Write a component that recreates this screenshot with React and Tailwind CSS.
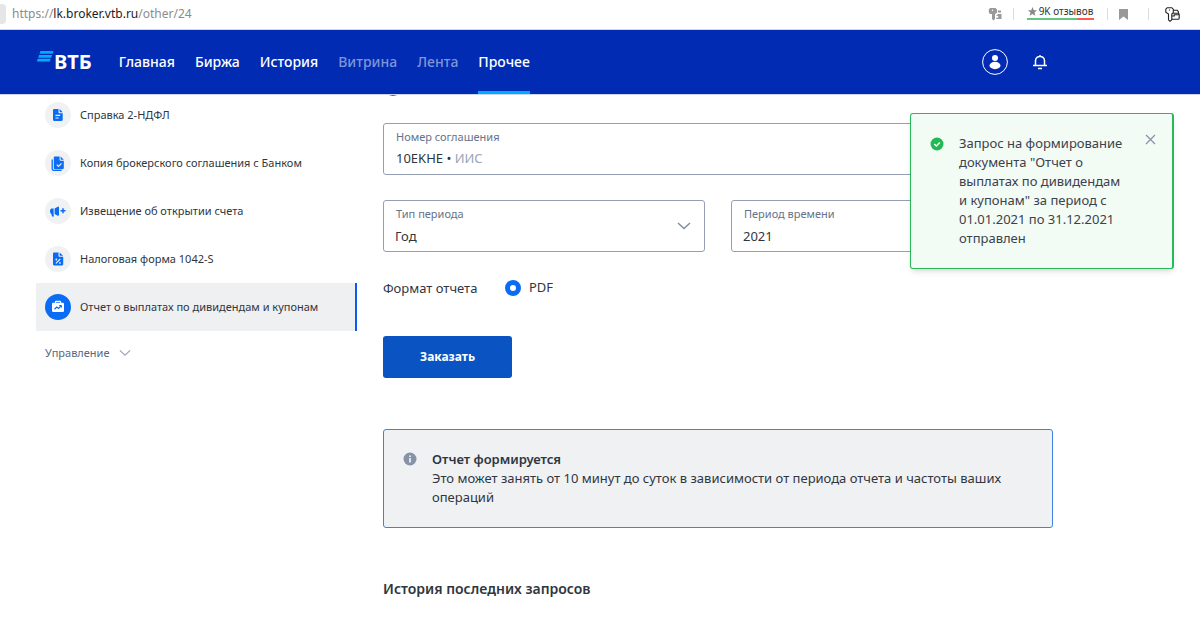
import { useState } from 'react';

const NAV = [
  { label: 'Главная' },
  { label: 'Биржа' },
  { label: 'История' },
  { label: 'Витрина', muted: true },
  { label: 'Лента', muted: true },
  { label: 'Прочее', active: true },
];

function DocIcon() {
  return (
    <svg width="14" height="14" viewBox="0 0 14 14" fill="#0a6cf5">
      <path d="M3.200 1h4.300v3.300c0 .6.400 1 1 1h3.200v6.500c0 .7-.5 1.200-1.200 1.200H3.200C2.500 13 2 12.500 2 11.800V2.200C2 1.500 2.500 1 3.200 1z" />
      <path d="M8.600 1l3.100 3.200H9.200c-.3 0-.6-.3-.6-.6z" />
      <path d="M4.500 7.300h4.700M4.500 10h3.200" stroke="#eef0f3" strokeWidth="1.200" />
    </svg>
  );
}

function CopyIcon() {
  return (
    <svg width="14" height="15" viewBox="0 0 14 15" fill="#0a6cf5">
      <path d="M1.200 3.500v9.300c0 .9.700 1.600 1.600 1.600h7.700" fill="none" stroke="#0a6cf5" strokeWidth="1.300" />
      <path d="M4 .6h4.600v3.200c0 .5.400.9.900.9h3.300v7.400c0 .7-.5 1.200-1.200 1.200H4c-.7 0-1.200-.5-1.200-1.200V1.800C2.800 1.100 3.300.6 4 .6z" />
      <path d="M9.600.6l3.200 3.100h-2.600c-.3 0-.6-.3-.6-.6z" />
      <path d="M5.800 8.600l1.700 1.700 3-3" fill="none" stroke="#eef0f3" strokeWidth="1.200" />
    </svg>
  );
}

function MegaphoneIcon() {
  return (
    <svg width="18" height="13" viewBox="0 0 18 13" fill="#0a6cf5">
      <path d="M8.800 1.700c.6-.3 1.200 0 1.200.6v7.800c0 .6-.6.900-1.200.6L5.600 9V3.400zM4.600 3.400V9l.3 2.600H3L2.400 9C1.500 8.400 1 7.400 1 6.200s.5-2.400 1.400-2.800z" />
      <path d="M14 3.200v5M11.500 5.700h5" stroke="#0a6cf5" strokeWidth="1.500" />
    </svg>
  );
}

function PercentIcon() {
  return (
    <svg width="14" height="14" viewBox="0 0 14 14" fill="#0a6cf5">
      <path d="M3.200.5h4.300v3.300c0 .6.400 1 1 1h3.700v7.500c0 .7-.5 1.200-1.200 1.200H3.200c-.7 0-1.200-.5-1.200-1.200V1.700C2 1 2.500.5 3.200.5z" />
      <path d="M8.600.5l3.500 3.300H9.200c-.3 0-.6-.3-.6-.6z" />
      <path d="M4.900 11.400l4.400-4.400" stroke="#eef0f3" strokeWidth="1.100" />
      <circle cx="5.300" cy="7.500" r=".9" fill="#eef0f3" />
      <circle cx="8.900" cy="10.900" r=".9" fill="#eef0f3" />
    </svg>
  );
}

function CaseIcon() {
  return (
    <svg width="14" height="14" viewBox="0 0 14 14">
      <path d="M4.500 3V2c0-.4.300-.700.700-.700h3.600c.4 0 .7.300.7.700v1" fill="none" stroke="#fff" strokeWidth="1.200" />
      <rect x="1" y="2.800" width="12" height="9.200" rx="1.200" fill="#fff" />
      <path d="M3.500 9.300l2.300-2.200 1.700 1.300 2.500-2.500" fill="none" stroke="#0a6cf5" strokeWidth="1.200" />
      <path d="M8.200 5.500h2.200v2.200" fill="none" stroke="#0a6cf5" strokeWidth="1" />
    </svg>
  );
}

function Chevron({ className }) {
  return (
    <svg className={className} width="14" height="8" viewBox="0 0 14 8" fill="none" stroke="currentColor" strokeWidth="1.400">
      <path d="M1 1l6 5.500L13 1" />
    </svg>
  );
}

const DOCS = [
  { label: 'Справка 2-НДФЛ', Icon: DocIcon },
  { label: 'Копия брокерского соглашения с Банком', Icon: CopyIcon },
  { label: 'Извещение об открытии счета', Icon: MegaphoneIcon },
  { label: 'Налоговая форма 1042-S', Icon: PercentIcon },
  { label: 'Отчет о выплатах по дивидендам и купонам', Icon: CaseIcon, active: true },
];

function AddressBar() {
  return (
    <div className="flex h-[30px] items-center border-b border-[#cfd3ea] bg-white pr-5 pb-px">
      <span className="h-5 w-[6px] rounded-r bg-[#e6e6e6]" />
      <p className="ml-[6px] text-xs text-[#8c8c8c]">
        https://<span className="text-[#1c1c1c]">lk.broker.vtb.ru</span>/other/24
      </p>
      <div className="ml-auto flex items-center">
        <svg width="14" height="14" viewBox="0 0 14 14" fill="#999">
          <path d="M2 1h5.500L9 2.500v3L7.500 7H7v5l-1.500 1.500L4 12V7H2L.8 5.500v-3z" />
          <path d="M9.800 3.500H13v2H9.800zM8.300 9V8.200h1.200V7h4v5H8.300v-1.200h2V9z" />
          <circle cx="4.500" cy="3.200" r=".7" fill="#fff" />
        </svg>
        <span className="ml-[11px] h-3 w-px bg-[#dcdcdc]" />
        <a href="#reviews" className="ml-[13px] flex w-[67px] flex-col pb-1">
          <span className="flex items-center justify-center gap-[2px] text-[10px] leading-[14px] whitespace-nowrap text-[#333]">
            <svg width="9" height="9" viewBox="0 0 10 10" fill="#888">
              <path d="M5 0l1.400 3.500L10 3.700 7.200 6l1 3.800L5 7.700 1.800 9.800l1-3.800L0 3.700l3.600-.2z" />
            </svg>
            9K отзывов
          </span>
          <span className="flex h-[2px]">
            <span className="w-3/4 bg-[#5fc77f]" />
            <span className="w-1/4 bg-[#ff5a4d]" />
          </span>
        </a>
        <span className="ml-[13px] h-3 w-px bg-[#dcdcdc]" />
        <svg className="ml-[11px]" width="9" height="11" viewBox="0 0 9 11" fill="#999">
          <path d="M0 0h9v11L4.500 7.500 0 11z" />
        </svg>
        <span className="ml-5 h-3 w-px bg-[#dcdcdc]" />
        <svg className="ml-4" width="15" height="15" viewBox="0 0 15 15" fill="none" stroke="#222" strokeWidth="1.100">
          <path d="M2.200.7h4.600L8.300 2.200v3.600L6.800 7v5.800L5 14.300l-1.500-1.500V7L.8 5.300V2.200z" />
          <path d="M4 3h1M8.300 3.200h3.900l1.200 1.500v1.500M6.800 12.300h6.200c.7 0 1.200-.4 1.200-1V7.400c0-.7-.5-1.200-1.200-1.200H8.300M6.800 9h2.400V7.800h5" />
        </svg>
      </div>
    </div>
  );
}

function Header() {
  return (
    <header className="relative z-10 flex h-16 items-stretch bg-[#002bb2] pr-[152px] pl-9 text-white shadow-[0_1px_0_#ccd5f0]">
      <a href="#home" className="flex items-center">
        <svg className="mb-3" width="18" height="13" viewBox="0 0 18 13" fill="#00aaff">
          <path d="M4.500 1h13l-.9 2.800h-13zM3.100 4.900h13l-.9 2.800h-13zM1.700 8.800h13l-.9 2.800H.8z" />
        </svg>
        <span className="text-xl font-bold">ВТБ</span>
      </a>
      <nav className="ml-[27px] flex gap-5">
        {NAV.map((item) => (
          <a
            key={item.label}
            href="#nav"
            className={
              item.active
                ? 'flex items-center border-y-3 border-t-transparent border-b-[#00aaff] text-sm font-medium'
                : item.muted
                  ? 'flex items-center text-sm font-medium text-[#7f95d8]'
                  : 'flex items-center text-sm font-medium'
            }
          >
            {item.label}
          </a>
        ))}
      </nav>
      <div className="ml-auto flex items-center gap-6">
        <button type="button" aria-label="Профиль">
          <svg width="26" height="26" viewBox="0 0 26 26" fill="#fff">
            <circle cx="13" cy="13" r="12.400" fill="none" stroke="#fff" />
            <circle cx="13" cy="9" r="3" />
            <ellipse cx="13" cy="16.500" rx="5.500" ry="3.700" />
          </svg>
        </button>
        <button type="button" aria-label="Уведомления">
          <svg width="16" height="16" viewBox="0 0 16 16" fill="none" stroke="#fff" strokeWidth="1.500">
            <path d="M1 11.500h14M3.500 11.500V6.800C3.500 4.200 5.500 2.500 8 2.500s4.500 1.700 4.500 4.300v4.700M8 2.500V1M6 14.500h4" />
          </svg>
        </button>
      </div>
    </header>
  );
}

function Sidebar() {
  return (
    <aside className="mt-[-3px] w-[321px] shrink-0">
      <ul>
        {DOCS.map(({ label, Icon, active }) => (
          <li key={label}>
            <a
              href="#doc"
              className={
                active
                  ? 'flex h-12 items-center gap-[9px] border-r-2 border-[#0a5cf0] bg-[#eff0f2] pl-[9px] text-[11px] whitespace-nowrap'
                  : 'flex h-12 items-center gap-[9px] pl-[9px] text-[11px] whitespace-nowrap'
              }
            >
              <span
                className={
                  active
                    ? 'flex size-[26px] items-center justify-center rounded-full bg-[#0a6cf5]'
                    : 'flex size-[26px] items-center justify-center rounded-full bg-[#f0f1f3]'
                }
              >
                <Icon />
              </span>
              {label}
            </a>
          </li>
        ))}
      </ul>
      <button type="button" className="mt-3 flex items-center gap-[9px] pl-[9px] text-[11px] leading-5 text-[#5b6780]">
        Управление
        <Chevron className="w-3 text-[#9aa5b8]" />
      </button>
    </aside>
  );
}

function SelectField({ id, label, value }) {
  return (
    <div className="relative flex h-[52px] flex-1 flex-col rounded-[3px] border border-[#959fb3]">
      <label htmlFor={id} className="px-3 pt-[5px] text-[11px] leading-4 text-[#66728a]">
        {label}
      </label>
      <select id={id} defaultValue={value} className="w-full flex-1 appearance-none bg-transparent px-[11px] text-[13px] outline-none">
        <option>{value}</option>
      </select>
      <Chevron className="pointer-events-none absolute top-[21px] right-[13px] text-[#7e8ba3]" />
    </div>
  );
}

function Toast({ onClose }) {
  return (
    <div
      role="status"
      className="absolute top-[113px] right-[26px] z-20 flex w-[264px] items-start rounded-[3px] border border-r-2 border-[#28b95a] bg-[#f3fbf5] py-5 pr-4 pl-[19px] shadow-md"
    >
      <svg className="mt-[3px] shrink-0" width="14" height="14" viewBox="0 0 14 14">
        <circle cx="7" cy="7" r="6.500" fill="#22b955" />
        <path d="M4.300 7.100l2 1.900 3.500-3.500" fill="none" stroke="#fff" strokeWidth="1.400" />
      </svg>
      <p className="ml-[15px] flex-1 pr-4 text-[13px] leading-[19px] text-[#3a424d]">
        Запрос на формирование документа "Отчет о выплатах по дивидендам и купонам" за период с 01.01.2021 по 31.12.2021 отправлен
      </p>
      <button type="button" aria-label="Закрыть" onClick={onClose}>
        <svg width="11" height="11" viewBox="0 0 11 11" fill="none" stroke="#8793a8" strokeWidth="1.300">
          <path d="M1 1l9 9M10 1l-9 9" />
        </svg>
      </button>
    </div>
  );
}

export default function App() {
  const [toastOpen, setToastOpen] = useState(true);

  return (
    <div className="relative min-h-screen overflow-hidden bg-white font-['Noto_Sans',sans-serif] text-[#2f3640]">
      <AddressBar />
      <Header />

      <div className="flex gap-[26px] pr-[147px] pl-9">
        <Sidebar />

        <main className="min-w-0 flex-1">
          <form onSubmit={(e) => e.preventDefault()}>
            {/* scrolled almost fully under the header */}
            <div className="-mt-4 flex h-[18px] pl-px">
              <input
                type="radio"
                name="scope"
                aria-label="Соглашение"
                defaultChecked
                className="size-[18px] appearance-none rounded-full border-[5px] border-[#0a6cf5] bg-white"
              />
            </div>

            <button
              type="button"
              aria-haspopup="listbox"
              className="mt-[27px] flex h-[52px] w-full flex-col gap-px rounded-[3px] border border-[#959fb3] px-3 pt-[5px] text-left"
            >
              <span className="text-[11px] leading-4 text-[#66728a]">Номер соглашения</span>
              <span className="text-[13px] leading-6">
                10EKHE • <span className="text-[#9aa5b8]">ИИС</span>
              </span>
            </button>

            <div className="mt-[25px] flex gap-[26px]">
              <SelectField id="period-type" label="Тип периода" value="Год" />
              <SelectField id="period" label="Период времени" value="2021" />
            </div>

            <fieldset className="mt-[26px] flex h-5 items-center text-[13px]">
              <legend className="float-left w-[122px] leading-5">Формат отчета</legend>
              <label className="flex items-center gap-2">
                <input
                  type="radio"
                  name="format"
                  defaultChecked
                  className="size-4 appearance-none rounded-full border-[5px] border-[#0a6cf5] bg-white"
                />
                PDF
              </label>
            </fieldset>

            <button type="submit" className="mt-[38px] h-[42px] w-[129px] rounded-[3px] bg-[#0a53c2] text-xs font-bold text-white">
              Заказать
            </button>
          </form>

          <section className="mt-[51px] flex items-start rounded-[3px] border border-[#3f80ea] bg-[#f0f1f3] py-5 pr-12 pl-[19px]">
            <svg className="mt-[2px] shrink-0" width="14" height="14" viewBox="0 0 14 14">
              <circle cx="7" cy="7" r="6.500" fill="#8592a8" />
              <path d="M7 6v4.500M7 3.500V5" stroke="#fff" strokeWidth="1.500" />
            </svg>
            <div className="ml-[15px] text-[13px] leading-[19px]">
              <h2 className="font-semibold">Отчет формируется</h2>
              <p>Это может занять от 10 минут до суток в зависимости от периода отчета и частоты ваших операций</p>
            </div>
          </section>

          <h2 className="mt-[51px] text-sm font-semibold">История последних запросов</h2>
        </main>
      </div>

      {toastOpen && <Toast onClose={() => setToastOpen(false)} />}
    </div>
  );
}
